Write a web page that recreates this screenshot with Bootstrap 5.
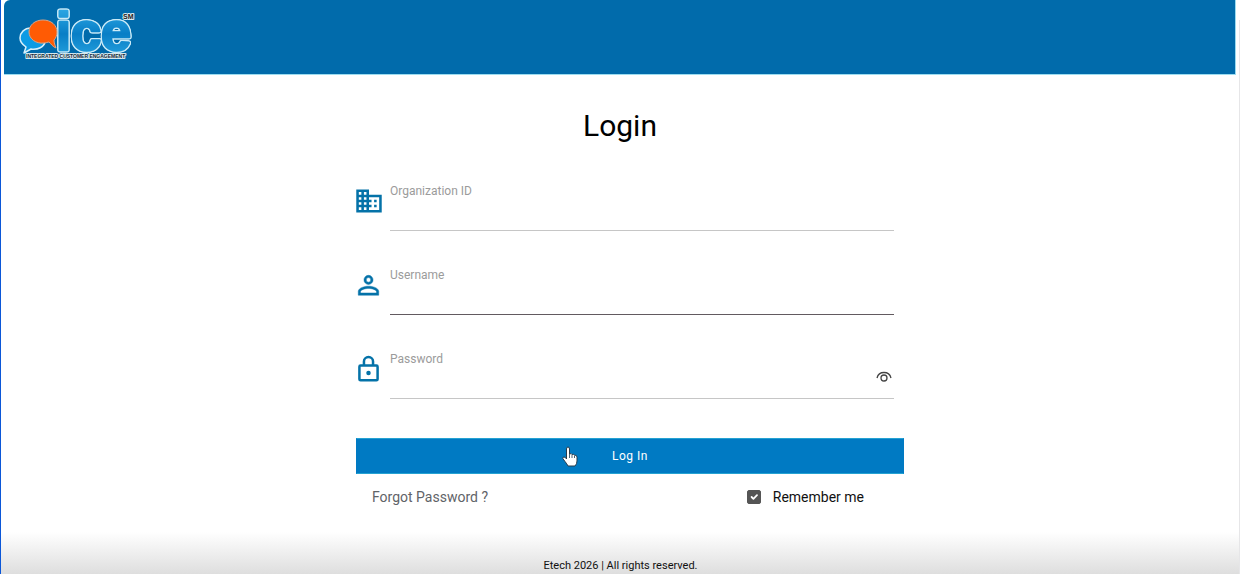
<!DOCTYPE html>
<html lang="en">
<head>
<meta charset="utf-8">
<meta name="viewport" content="width=device-width, initial-scale=1">
<title>Login</title>
<link href="https://cdn.jsdelivr.net/npm/bootstrap@5.3.0/dist/css/bootstrap.min.css" rel="stylesheet">
<style>
  body { font-family: Roboto, "Liberation Sans", sans-serif; color: #111; background: #fff; }
  .page-shell { border-left: 1px solid #0b57d8; padding: 0 4px 0 3px; }
  .page-shell::after { content: ""; position: absolute; right: 0; top: 20px; bottom: 0; width: 1px; background: #e6e6e8; }
  .top-bar { background: #016bab; height: 75px; border: solid #9cdcf0; border-width: 0 1px 1px 0; border-top-left-radius: 6px; padding: 6px 13px; }
  .logo-word { filter: drop-shadow(1px 0 0 #ccebf7) drop-shadow(-1px 0 0 #ccebf7) drop-shadow(0 1px 0 #ccebf7) drop-shadow(0 -1px 0 #ccebf7); }
  .login-title { font-size: 30px; line-height: 36px; margin-top: 33px; color: #000; }
  .login-form { max-width: 568px; padding-left: 20px; margin-top: 38px; }
  .field-row { height: 84px; padding-right: 10px; }
  .field-icon { width: 26px; margin-right: 8px; padding-top: 5px; color: #0472a8; }
  .field-label { font-size: 12px; line-height: 18px; color: #9b9b9b; }
  .field-box { border-bottom: 1px solid #c6c6c6; height: 49px; }
  .field-box.active { border-color: #625a60; }
  .field-input { height: 30px; font-size: 14px; }
  .field-input:focus { box-shadow: none; }
  .eye-btn { width: 16px; height: 16px; right: 2px; bottom: 13px; color: #444; }
  .login-btn { height: 36px; background: #007ac3; color: #fff; font-size: 12px; letter-spacing: .5px; border: 1px solid #007ac3; border-top-color: #25a2d2; border-bottom-color: #25a2d2; border-radius: 0; margin-top: 4px; }
  .login-btn:hover { background: #006fb3; color: #fff; }
  .pointer-mark { left: 206px; top: 12px; }
  .form-links { font-size: 14px; line-height: 20px; padding: 0 40px 0 16px; margin-top: 13px; }
  .forgot-link { color: #5f6368; }
  .form-check-input.remember-box { width: 14px; height: 14px; border-radius: 2px; border-color: #555; margin: 0; }
  .form-check-input.remember-box:checked { background-color: #555; border-color: #555; }
  .page-foot { margin: 0 -4px 0 -3px; height: 42px; padding-top: 26px; font-size: 11px; line-height: 16px; color: #111; background: linear-gradient(#fff, #dedede); }
</style>
</head>
<body>
<div class="page-shell position-relative min-vh-100 d-flex flex-column">
  <header class="top-bar">
    <a href="#" aria-label="ICE Integrated Customer Engagement" class="d-inline-block">
      <svg class="d-block overflow-visible" width="122" height="58" viewBox="17 6 122 58" font-family="Liberation Sans, sans-serif" font-weight="bold">
        <defs>
          <linearGradient id="iceBlue" x1="0" y1="0" x2="0" y2="1">
            <stop offset="0" stop-color="#38b4ed"/><stop offset=".55" stop-color="#087ec6"/><stop offset="1" stop-color="#2aa7e2"/>
          </linearGradient>
        </defs>
        <path d="M31 28C24 28 20 33 20 38c0 4 3 7 6 9l-2 6 7-4c7 1 13-2 14-7 1-6-5-14-14-14Z" fill="#0d9be4" stroke="#d9f1fb" stroke-width="1.500" stroke-linejoin="round"/>
        <text class="logo-word" x="56" y="50" font-size="54" fill="url(#iceBlue)" stroke="url(#iceBlue)" stroke-width="2.500" stroke-linejoin="round">ice</text>
        <path d="M43 20c-8 0-14 5-14 12 0 7 7 12 15 11 2 0 4-1 5-1 2 2 4 5 7 6-1-3-2-5-2-8 2-2 3-5 3-8 0-7-6-12-14-12Z" fill="#ff5b04" stroke="#d6a58a" stroke-width="1" stroke-linejoin="round"/>
        <text x="123" y="19" font-size="7" fill="#222" stroke="#d8e8ee" stroke-width="2" stroke-linejoin="round" paint-order="stroke">SM</text>
        <text x="26" y="58" font-size="5" fill="#182a36" stroke="#d5e8ef" stroke-width="2" stroke-linejoin="round" paint-order="stroke">INTEGRATED CUSTOMER ENGAGEMENT</text>
      </svg>
    </a>
  </header>

  <main class="flex-grow-1">
    <h1 class="login-title text-center fw-normal mb-0">Login</h1>
    <form class="login-form mx-auto">
      <div class="field-row d-flex">
        <div class="field-icon">
          <svg class="d-block" width="26" height="28" viewBox="2 1 20 22" fill="currentColor" aria-hidden="true"><path fill-rule="evenodd" d="M12 7V3H2v18h20V7H12ZM6 19H4v-2h2v2Zm0-4H4v-2h2v2Zm0-4H4V9h2v2Zm0-4H4V5h2v2Zm4 12H8v-2h2v2Zm0-4H8v-2h2v2Zm0-4H8V9h2v2Zm0-4H8V5h2v2Zm10 12h-8v-2h2v-2h-2v-2h2v-2h-2V9h8v10Zm-2-8h-2v2h2v-2Zm0 4h-2v2h2v-2Z"/></svg>
        </div>
        <div class="flex-grow-1">
          <div class="field-box">
            <label class="field-label d-block" for="org">Organization ID</label>
            <input id="org" type="text" class="field-input form-control border-0 rounded-0 bg-transparent p-0">
          </div>
        </div>
      </div>
      <div class="field-row d-flex">
        <div class="field-icon">
          <svg class="d-block" width="25" height="28" viewBox="1 0 22 24" fill="currentColor" stroke="currentColor" stroke-width=".4" aria-hidden="true"><path fill-rule="evenodd" d="M12 3.500a4 4 0 1 1 0 8 4 4 0 0 1 0-8Zm0 2a2 2 0 1 0 0 4 2 2 0 0 0 0-4ZM12 13c3.200 0 9 1.500 9 4.600V21H3v-3.400C3 14.500 8.800 13 12 13Zm0 2c-3 0-7 1.400-7 2.700V19h14v-1.300c0-1.300-4-2.700-7-2.700Z"/></svg>
        </div>
        <div class="flex-grow-1">
          <div class="field-box active">
            <label class="field-label d-block" for="user">Username</label>
            <input id="user" type="text" class="field-input form-control border-0 rounded-0 bg-transparent p-0">
          </div>
        </div>
      </div>
      <div class="field-row d-flex">
        <div class="field-icon">
          <svg class="d-block" width="25" height="28" viewBox="1 0 22 24" fill="none" stroke="currentColor" stroke-width="2.200" aria-hidden="true"><rect x="4" y="9" width="16" height="13" rx="1"/><path d="M8 9V5.500a4 4 0 0 1 8 0V9"/><circle cx="12" cy="15.500" r="2" fill="currentColor" stroke="none"/></svg>
        </div>
        <div class="flex-grow-1">
          <div class="field-box position-relative">
            <label class="field-label d-block" for="pass">Password</label>
            <input id="pass" type="password" class="field-input form-control border-0 rounded-0 bg-transparent p-0">
            <button type="button" class="eye-btn btn border-0 p-0 position-absolute d-flex" aria-label="Show password">
              <svg width="16" height="16" viewBox="0 0 16 16" fill="none" stroke="currentColor" stroke-width="1.300"><path d="M1 9C2 5 5 3.500 8 3.500S14 5 15 9"/><circle cx="8" cy="9" r="3"/></svg>
            </button>
          </div>
        </div>
      </div>
      <div class="position-relative">
        <button type="submit" class="login-btn btn w-100 p-0">Log In</button>
        <svg class="pointer-mark position-absolute pe-none" width="16" height="22" viewBox="0 0 16 22" aria-hidden="true"><path d="M4.500 13V3q0-2 1.500-2t1.500 2v5q2-1 2.500.5 2-.8 2.500.7 2.500-.5 2.500 2V15q0 3-2 5H6q-1-2-3-4.500L.8 12.500Q.5 11 2 11t2.500 2Z" fill="#fff" stroke="#263b4b" stroke-width="1"/><path d="M7.500 8v4M10 8.500V12M12.500 9.500V12" stroke="#4b6272" fill="none"/></svg>
      </div>
      <div class="form-links d-flex justify-content-between">
        <a href="#" class="forgot-link text-decoration-none">Forgot Password ?</a>
        <div class="d-flex align-items-center">
          <input id="remember" type="checkbox" class="remember-box form-check-input" checked>
          <label for="remember" class="ps-2 ms-1">Remember me</label>
        </div>
      </div>
    </form>
  </main>

  <footer class="page-foot text-center">Etech 2026 | All rights reserved.</footer>
</div>
<script src="https://cdn.jsdelivr.net/npm/bootstrap@5.3.0/dist/js/bootstrap.bundle.min.js"></script>
</body>
</html>
